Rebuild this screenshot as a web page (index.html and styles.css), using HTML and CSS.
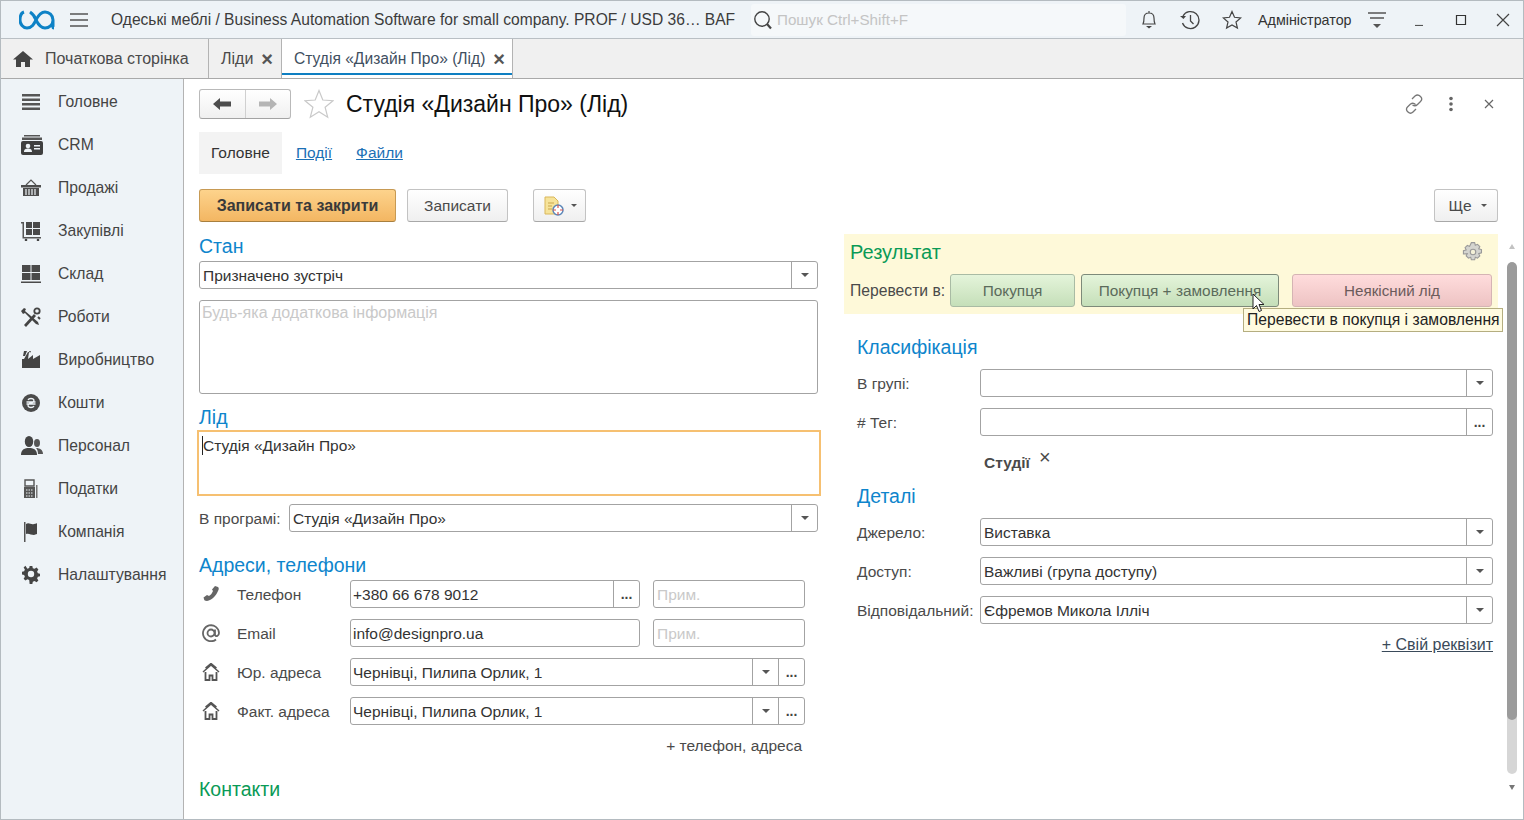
FILE: index.html
```html
<!DOCTYPE html>
<html>
<head>
  <meta charset="utf-8">
  <link rel="stylesheet" href="styles.css">
</head>
<body>
  <div class="app">
    <!-- Top bar -->
    <div class="topbar">
      <svg class="logo" width="36" height="20" viewBox="0 0 36 20"><path d="M5 2C2 3 1 6 1 10c0 4 3 8 7 8 5 0 7-4 9-8 2-4 5-8 9-8 4 0 8 3 8 8s-4 8-8 8c-4 0-7-4-9-8-1-3-3-6-6-8M34 10v7c0 1 0 1 1 1" fill="none" stroke="#0e82c6" stroke-width="3"/></svg>
      <svg class="burger" width="18" height="16" viewBox="0 0 18 16"><path d="M0 2h18M0 8h18M0 14h18" stroke="#555" stroke-width="1.4"/></svg>
      <div class="app-title">Одеські меблі / Business Automation Software for small company. PROF / USD 36… BAF</div>
      <div class="search">
        <svg width="22" height="22" viewBox="0 0 22 22"><circle cx="10" cy="10" r="7.2" fill="none" stroke="#444" stroke-width="1.4"/><path d="M15 15l4 4.500" stroke="#444" stroke-width="2.200"/></svg>
        <span class="search-text">Пошук Ctrl+Shift+F</span>
      </div>
      <div class="top-icons">
        <svg width="18" height="20" viewBox="0 0 18 20"><path d="M3 14c1-2 1-3 1-6 0-3 2-5 5-5s5 2 5 5c0 3 0 4 1 6zM9 1v2" fill="none" stroke="#444" stroke-width="1.200"/><path d="M6 16h6l-3 2.500z" fill="#444"/></svg>
        <svg width="22" height="20" viewBox="0 0 22 20"><path d="M4 6a8.500 8.500 0 1 1-.5 7M11.500 5v6l3 3" fill="none" stroke="#444" stroke-width="1.300"/><path d="M1 6h6l-2.500 3z" fill="#444"/></svg>
        <svg width="20" height="20" viewBox="0 0 20 20"><path d="M10 1.500l2.500 5.800 6.200.6-4.700 4.100 1.400 6.100-5.400-3.200-5.400 3.200 1.400-6.100L1.300 7.900l6.200-.6z" fill="none" stroke="#444" stroke-width="1.200"/></svg>
      </div>
      <div class="user-name">Адміністратор</div>
      <svg class="user-menu" width="18" height="20" viewBox="0 0 18 20"><path d="M0 3h18M2 8h14" stroke="#555" stroke-width="1.400"/><path d="M5 14h8l-4 4z" fill="#555"/></svg>
      <div class="win-btns">
        <svg width="12" height="12" viewBox="0 0 12 12"><path d="M1 11.500h8" stroke="#555" stroke-width="1.200"/></svg>
        <svg width="12" height="12" viewBox="0 0 12 12"><path d="M1.500 1.500h9v9h-9z" fill="none" stroke="#333" stroke-width="1.200"/></svg>
        <svg width="14" height="14" viewBox="0 0 14 14"><path d="M1 1l12 12M13 1L1 13" stroke="#444" stroke-width="1.200"/></svg>
      </div>
    </div>

    <!-- Open tabs -->
    <div class="tabs">
      <div class="tab tab-home">
        <svg width="20" height="16" viewBox="0 0 20 16"><path d="M10 0L0 8.500h3V16h5v-5h4v5h5V8.500h3z" fill="#444"/></svg>
        <span>Початкова сторінка</span>
      </div>
      <div class="tab tab-leads"><span>Ліди</span><span class="tab-close">×</span></div>
      <div class="tab tab-active"><span>Студія «Дизайн Про» (Лід)</span><span class="tab-close">×</span></div>
    </div>

    <div class="workspace">
      <!-- Section menu -->
      <div class="sidebar">
        <div class="side-item">
          <svg width="20" height="20" viewBox="0 0 20 20"><path d="M1 2h18v2.500H1zM1 6.500h18V9H1zM1 11h18v2.500H1zM1 15.500h18V18H1z" fill="#555"/></svg>
          <span>Головне</span>
        </div>
        <div class="side-item">
          <svg width="22" height="20" viewBox="0 0 22 20"><path d="M3 0h16v1.500H3zM1 2.500h20V5H1z" fill="#555"/><path d="M2 6h18q2 0 2 2v10q0 2-2 2H2q-2 0-2-2V8q0-2 2-2z" fill="#3f3f3f"/><circle cx="7" cy="11" r="2.300" fill="#eef3f7"/><path d="M3 17c0-3 2-3.500 4-3.500s4 .5 4 3.500zM13 10h6v1.500h-6zM13 13h6v1.500h-6z" fill="#eef3f7"/></svg>
          <span>CRM</span>
        </div>
        <div class="side-item">
          <svg width="20" height="20" viewBox="0 0 20 20"><path d="M5 7l5-5 5 5" fill="none" stroke="#555" stroke-width="1.200"/><path d="M0 7h20v2.500H0zM2 10h16v8H2z" fill="#4d4d4d"/><path d="M5 11v6M8 11v6M11 11v6M14 11v6" stroke="#eef3f7" stroke-width="1.200"/></svg>
          <span>Продажі</span>
        </div>
        <div class="side-item">
          <svg width="20" height="20" viewBox="0 0 20 20"><path d="M0 1h3v15h17v1.500H1.500V2.500H0z" fill="#555"/><path d="M5 1h6v6H5zM12 1h7v6h-7zM5 8h6v6H5zM12 8h7v6h-7z" fill="#4a4a4a"/><circle cx="5" cy="19" r="1.300" fill="#444"/><circle cx="17" cy="19" r="1.300" fill="#444"/></svg>
          <span>Закупівлі</span>
        </div>
        <div class="side-item">
          <svg width="20" height="20" viewBox="0 0 20 20"><path d="M1 1h8.500v7H1zM10.500 1H19v7h-8.500zM1 9h8.500v7H1zM10.500 9H19v7h-8.500zM0 17.500h20V19H0z" fill="#4a4a4a"/></svg>
          <span>Склад</span>
        </div>
        <div class="side-item">
          <svg width="20" height="20" viewBox="0 0 20 20"><path d="M0 4l3-3 2 1-1 2 13 11 1 3-3-1L4 6 2 7z" fill="#444"/><path d="M3 18L13 7l2 2L5 20z" fill="#444"/><circle cx="16" cy="4" r="2.700" fill="none" stroke="#444" stroke-width="1.800"/><path d="M17 10l2 2" stroke="#444" stroke-width="2"/></svg>
          <span>Роботи</span>
        </div>
        <div class="side-item">
          <svg width="20" height="20" viewBox="0 0 20 20"><path d="M1 18V9l2 0 4-7h1l-1 7 5-4v4l7-4v13z" fill="#444"/><path d="M3 1h3L4 6H2zM8 1h2L9 3z" fill="#444"/></svg>
          <span>Виробництво</span>
        </div>
        <div class="side-item">
          <svg width="20" height="20" viewBox="0 0 20 20"><circle cx="10" cy="10" r="9" fill="#4a4a4a"/><path d="M7 7c1-2 5-2 6 0 0 2-2 3-3 3s-3 1-3 3c1 2 5 2 6 0M5.500 9h9M5.500 11h9" fill="none" stroke="#eef3f7" stroke-width="1.300"/></svg>
          <span>Кошти</span>
        </div>
        <div class="side-item">
          <svg width="22" height="20" viewBox="0 0 22 20"><ellipse cx="8" cy="5.500" rx="4.200" ry="5.500" fill="#444"/><path d="M0 19c0-6 4-7 8-7s8 1 8 7z" fill="#444"/><ellipse cx="16" cy="7" rx="3" ry="4" fill="#555"/><path d="M17 18c0-3-1-5-2-6 4 0 7 2 7 6z" fill="#555"/></svg>
          <span>Персонал</span>
        </div>
        <div class="side-item">
          <svg width="20" height="20" viewBox="0 0 20 20"><path d="M4 1h9v6H4z" fill="none" stroke="#555" stroke-width="1.400"/><path d="M3 8h11v11H3z" fill="#555"/><path d="M15 6h1.500v13H15z" fill="#777"/><path d="M5 11h7M5 14h7M5 17h7" stroke="#eef3f7" stroke-width="1.100" stroke-dasharray="1.500 1"/></svg>
          <span>Податки</span>
        </div>
        <div class="side-item">
          <svg width="20" height="20" viewBox="0 0 20 20"><path d="M3 0h1.500v20H3z" fill="#555"/><path d="M5 2c3-2 5 1 8 0 2 0 3-1 3-1v11s-1 0-3 1c-3 0-5-2-8-1z" fill="#444"/></svg>
          <span>Компанія</span>
        </div>
        <div class="side-item">
          <svg width="20" height="20" viewBox="0 0 20 20"><path d="M8.500 1h3l.5 2.500 2 .8 2.200-1.400 2 2-1.400 2.200.8 2 2.400.5v3l-2.400.5-.8 2 1.400 2.200-2 2-2.200-1.400-2 .8-.5 2.300h-3L8 16.700l-2-.8-2.200 1.400-2-2L3.200 13l-.8-2L0 10.500v-3L2.400 7l.8-2-1.400-2.200 2-2L6 4.200l2-.8z" transform="translate(1 0) scale(.9)" fill="#444"/><circle cx="10" cy="9" r="3.200" fill="#eef3f7"/></svg>
          <span>Налаштування</span>
        </div>
      </div>

      <!-- Form -->
      <div class="form-page">
        <div class="form-head">
          <div class="nav-btns">
            <div class="nav-btn">
              <svg width="18" height="12" viewBox="0 0 18 12"><path d="M0 6l7-6v3.500h11v5H7V12z" fill="#4d4d4d"/></svg>
            </div>
            <div class="nav-btn">
              <svg width="18" height="12" viewBox="0 0 18 12"><path d="M18 6l-7-6v3.500H0v5h11V12z" fill="#b5b5b5"/></svg>
            </div>
          </div>
          <svg class="fav-star" width="30" height="30" viewBox="0 0 30 30"><path d="M15 1.500l3.800 9.500 10.200.7-7.900 6.500 2.600 10-8.700-5.500-8.700 5.500 2.600-10L1 11.700 11.200 11z" fill="none" stroke="#c9c9c9" stroke-width="1.200"/></svg>
          <h1 class="form-title">Студія «Дизайн Про» (Лід)</h1>
          <div class="head-tools">
            <svg class="tool-link" width="20" height="20" viewBox="0 0 20 20"><path d="M8 5l3-3c2-1.500 4-1 5.500.5s1.500 3.500 0 5l-3 3c-1.500 1.500-3.500 1.500-5 .5M12 15l-3 3c-1.500 1.500-3.500 1.500-5 0s-2-3.500-.5-5l3-3c1.500-1 3.500-1 5 .5" fill="none" stroke="#777" stroke-width="1.300"/></svg>
            <svg class="tool-more" width="6" height="16" viewBox="0 0 6 16"><circle cx="3" cy="2.500" r="1.800" fill="#666"/><circle cx="3" cy="8" r="1.800" fill="#666"/><circle cx="3" cy="13.500" r="1.800" fill="#666"/></svg>
            <svg width="10" height="10" viewBox="0 0 10 10"><path d="M1 1l8 8M9 1L1 9" stroke="#666" stroke-width="1.200"/></svg>
          </div>
        </div>

        <div class="page-tabs">
          <div class="page-tab page-tab-active">Головне</div>
          <a class="page-tab page-link">Події</a>
          <a class="page-tab page-link">Файли</a>
        </div>

        <div class="toolbar">
          <div class="btn btn-primary">Записати та закрити</div>
          <div class="btn btn-save">Записати</div>
          <div class="btn btn-icon">
            <svg width="22" height="20" viewBox="0 0 22 20"><path d="M2 1h9l4 4v13H2z" fill="#f6e39a" stroke="#d9b75a"/><path d="M5 7h6M5 10h4M5 13h4" stroke="#c9a64d"/><circle cx="15" cy="14" r="5" fill="#fff" stroke="#5b86b8" stroke-width="1.500"/><path d="M15 9v3M15 16v3M10 14h3M17 14h3" stroke="#d9534f" stroke-width="1.200"/></svg>
            <span class="caret caret-small"></span>
          </div>
          <div class="btn btn-more">Ще<span class="caret caret-small"></span></div>
        </div>

        <div class="columns">
          <div class="col-left">
            <div class="heading heading-first">Стан</div>
            <div class="field">
              <div class="field-text">Призначено зустріч</div>
              <div class="field-btn"><span class="caret"></span></div>
            </div>
            <div class="memo">Будь-яка додаткова інформація</div>

            <div class="heading heading-lead">Лід</div>
            <div class="lead-box"><span class="text-cursor"></span>Студія «Дизайн Про»</div>
            <div class="row-program">
              <label class="label-program">В програмі:</label>
              <div class="field field-grow">
                <div class="field-text">Студія «Дизайн Про»</div>
                <div class="field-btn"><span class="caret"></span></div>
              </div>
            </div>

            <div class="heading heading-address">Адреси, телефони</div>
            <div class="contact-row">
              <svg class="contact-icon" width="18" height="18" viewBox="0 0 18 18"><path d="M13 1l3 1c1 1 1 2 0 4-2 5-6 9-11 10-2 0-3-1-3-2l-.5-1.500 3.500-2.500 2 1c2-1 3-3 4-5l-1-1.500z" fill="#666"/></svg>
              <span class="contact-label">Телефон</span>
              <div class="field contact-field">
                <div class="field-text">+380 66 678 9012</div>
                <div class="field-btn field-dots">...</div>
              </div>
              <div class="field note-field"><div class="field-text note-text">Прим.</div></div>
            </div>
            <div class="contact-row">
              <svg class="contact-icon" width="18" height="18" viewBox="0 0 18 18"><path d="M14 15.500A8 8 0 1 1 17 9c0 3-3 4-4 2V5.500M12.500 9a3.500 3.500 0 1 1-7 0 3.500 3.500 0 0 1 7 0z" fill="none" stroke="#666" stroke-width="1.800"/></svg>
              <span class="contact-label">Email</span>
              <div class="field contact-field">
                <div class="field-text">info@designpro.ua</div>
              </div>
              <div class="field note-field"><div class="field-text note-text">Прим.</div></div>
            </div>
            <div class="contact-row">
              <svg class="contact-icon" width="18" height="18" viewBox="0 0 18 18"><path d="M1 9l8-7 8 7M3.500 5l5.500-4.500L14.500 5" fill="none" stroke="#555" stroke-width="1.500"/><path d="M3.500 9v8h4v-4.500h3V17h4V9" fill="none" stroke="#555" stroke-width="1.800"/></svg>
              <span class="contact-label">Юр. адреса</span>
              <div class="field contact-field">
                <div class="field-text">Чернівці, Пилипа Орлик, 1</div>
                <div class="field-btn"><span class="caret"></span></div>
                <div class="field-btn field-dots">...</div>
              </div>
            </div>
            <div class="contact-row">
              <svg class="contact-icon" width="18" height="18" viewBox="0 0 18 18"><path d="M1 9l8-7 8 7M3.500 5l5.500-4.500L14.500 5" fill="none" stroke="#555" stroke-width="1.500"/><path d="M3.500 9v8h4v-4.500h3V17h4V9" fill="none" stroke="#555" stroke-width="1.800"/></svg>
              <span class="contact-label">Факт. адреса</span>
              <div class="field contact-field">
                <div class="field-text">Чернівці, Пилипа Орлик, 1</div>
                <div class="field-btn"><span class="caret"></span></div>
                <div class="field-btn field-dots">...</div>
              </div>
            </div>
            <div class="add-contact">+ телефон, адреса</div>
            <div class="heading heading-green heading-contacts">Контакти</div>
          </div>

          <div class="col-right">
            <div class="result-box">
              <div class="result-head">
                <div class="result-title">Результат</div>
                <svg width="22" height="22" viewBox="0 0 20 20"><path d="M8.500 1h3l.6 2.400 2-.9 2.100 2.100-1 2 2.500.7v3l-2.500.7 1 2-2.100 2.100-2-.9-.6 2.400h-3l-.6-2.400-2 .9-2.100-2.100 1-2L1.300 11.300v-3L3.800 7.600l-1-2 2.100-2.100 2 .9z" transform="translate(0 .5)" fill="#d4d4cf" stroke="#999" stroke-width="1"/><circle cx="10" cy="10" r="2.500" fill="#f4f1d8" stroke="#999"/></svg>
              </div>
              <div class="result-row">
                <span class="result-label">Перевести в:</span>
                <div class="btn btn-green btn-buy">Покупця</div>
                <div class="btn btn-green btn-order">Покупця + замовлення</div>
                <div class="btn btn-red">Неякісний лід</div>
              </div>
              <div class="tooltip">Перевести в покупця і замовлення</div>
              <svg class="mouse" width="13" height="21" viewBox="0 0 13 21"><path d="M1 1v15l3.500-3.500 2.500 6 2.500-1-2.500-6H12z" fill="#fff" stroke="#222"/></svg>
            </div>

            <div class="right-inner">
              <div class="heading heading-class">Класифікація</div>
              <div class="form-row">
                <label>В групі:</label>
                <div class="field field-grow">
                  <div class="field-text"></div>
                  <div class="field-btn"><span class="caret"></span></div>
                </div>
              </div>
              <div class="form-row">
                <label># Тег:</label>
                <div class="field field-grow">
                  <div class="field-text"></div>
                  <div class="field-btn field-dots">...</div>
                </div>
              </div>
              <div class="tag-row"><b>Студії</b><span class="tag-close">×</span></div>

              <div class="heading heading-details">Деталі</div>
              <div class="form-row">
                <label>Джерело:</label>
                <div class="field field-grow">
                  <div class="field-text">Виставка</div>
                  <div class="field-btn"><span class="caret"></span></div>
                </div>
              </div>
              <div class="form-row">
                <label>Доступ:</label>
                <div class="field field-grow">
                  <div class="field-text">Важливі (група доступу)</div>
                  <div class="field-btn"><span class="caret"></span></div>
                </div>
              </div>
              <div class="form-row">
                <label>Відповідальний:</label>
                <div class="field field-grow">
                  <div class="field-text">Єфремов Микола Ілліч</div>
                  <div class="field-btn"><span class="caret"></span></div>
                </div>
              </div>
              <div class="custom-link"><a>+ Свій реквізит</a></div>
            </div>
          </div>
        </div>

        <!-- Scrollbar of the form -->
        <div class="scroll">
          <span class="scroll-up"></span>
          <div class="scroll-track"><div class="scroll-thumb"></div></div>
          <span class="scroll-down"></span>
        </div>
      </div>
    </div>
  </div>
</body>
</html>
```

FILE: styles.css
```css
/* Page */
* {
  box-sizing: border-box;
}

html, body {
  margin: 0;
  height: 100%;
  overflow: hidden;
}

body {
  font-family: "Liberation Sans", Arial, sans-serif;
  font-size: 15.5px;
  color: #4a4a4a;
  background: #fff;
}

.app {
  width: 1524px;
  height: 820px;
  display: flex;
  flex-direction: column;
  border: 1px solid #b4bbc0;
  overflow: hidden;
}

/* Top bar */
.topbar {
  height: 38px;
  flex: none;
  display: flex;
  align-items: center;
  background: #eef3f7;
  border-bottom: 1px solid #b9bfc4;
}

.logo {
  margin-left: 18px;
  flex: none;
}

.burger {
  margin-left: 15px;
  flex: none;
}

.app-title {
  margin-left: 23px;
  width: 640px;
  white-space: nowrap;
  color: #3c3c3c;
  font-size: 15.6px;
}

.search {
  width: 375px;
  height: 32px;
  display: flex;
  align-items: center;
  background: #f5f8fa;
  border-radius: 3px;
  padding-left: 1px;
}

.search-text {
  margin-left: 3px;
  color: #c4c4c4;
  font-size: 15.2px;
}

.top-icons {
  display: flex;
  align-items: center;
  gap: 21px;
  margin-left: 14px;
}

.user-name {
  margin-left: 16px;
  font-size: 14.3px;
  color: #333;
  white-space: nowrap;
}

.user-menu {
  margin-left: 16px;
}

.win-btns {
  display: flex;
  align-items: center;
  gap: 29px;
  margin-left: 28px;
}

/* Open tabs */
.tabs {
  height: 40px;
  flex: none;
  display: flex;
  background: #f0f0f0;
  border-bottom: 1px solid #a9a9a9;
}

.tab {
  display: flex;
  align-items: center;
  height: 39px;
  border-right: 1px solid #b3b3b3;
  white-space: nowrap;
  color: #4a4a4a;
  font-size: 16px;
}

.tab-home {
  width: 208px;
  padding-left: 12px;
  gap: 12px;
}

.tab-leads {
  width: 73px;
  padding-left: 12px;
  gap: 8px;
}

.tab-active {
  width: 231px;
  padding-left: 12px;
  gap: 8px;
  background: #fff;
  color: #3f4f5f;
  font-size: 15.6px;
  box-shadow: inset 0 -3px 0 #fff, inset 0 -5px 0 #0e7fc2;
}

.tab-close {
  font-size: 20px;
  font-weight: bold;
  line-height: 20px;
  color: #555;
}

/* Workspace */
.workspace {
  flex: 1;
  display: flex;
  min-height: 0;
}

.sidebar {
  width: 183px;
  flex: none;
  background: #eef3f7;
  border-right: 1px solid #b3b3b3;
  padding-top: 1px;
  font-size: 15.7px;
}

.side-item {
  height: 43px;
  display: flex;
  align-items: center;
  padding-left: 20px;
  color: #444;
}

.side-item svg {
  flex: none;
  margin-right: 15px;
}

.side-item svg[width="20"] {
  margin-right: 17px;
}

/* Form */
.form-page {
  flex: 1;
  position: relative;
  padding: 10px 0 0 15px;
  min-width: 0;
}

.form-head {
  display: flex;
  align-items: center;
  height: 30px;
}

.nav-btns {
  display: flex;
  width: 92px;
  height: 30px;
  border: 1px solid #b9b9b9;
  border-bottom-color: #a3a3a3;
  border-radius: 3px;
  background: linear-gradient(#fff, #f0f0f0);
}

.nav-btn {
  flex: 1;
  display: flex;
  align-items: center;
  justify-content: center;
}

.nav-btn + .nav-btn {
  border-left: 1px solid #d0d0d0;
}

.fav-star {
  margin-left: 13px;
}

.form-title {
  margin: 0 0 0 12px;
  font-size: 23px;
  font-weight: normal;
  color: #111;
  white-space: nowrap;
}

.head-tools {
  margin-left: auto;
  margin-right: 29px;
  display: flex;
  align-items: center;
}

.tool-link {
  margin-right: 24px;
}

.tool-more {
  margin-right: 30px;
}

.page-tabs {
  display: flex;
  margin-top: 13px;
  height: 42px;
  align-items: center;
}

.page-tab {
  height: 42px;
  display: flex;
  align-items: center;
  padding: 0 12px;
}

.page-tab-active {
  background: #f3f3f3;
  color: #333;
}

.page-link {
  color: #1b6fb5;
  text-decoration: underline;
  padding: 0;
  margin-left: 14px;
}

.page-link + .page-link {
  margin-left: 24px;
}

/* Buttons */
.toolbar {
  display: flex;
  align-items: center;
  margin-top: 15px;
  height: 33px;
  padding-right: 25px;
}

.btn {
  height: 33px;
  display: flex;
  align-items: center;
  justify-content: center;
  border: 1px solid #c3c3c3;
  border-bottom-color: #a8a8a8;
  border-radius: 3px;
  background: linear-gradient(#fff, #efefef);
  white-space: nowrap;
}

.btn-primary {
  width: 197px;
  font-weight: bold;
  font-size: 16px;
  color: #3a3a3a;
  border-color: #c79a54 #c79a54 #a87f3e;
  background: linear-gradient(#fdd38c, #f3b662);
}

.btn-save {
  width: 101px;
  margin-left: 11px;
}

.btn-icon {
  width: 53px;
  margin-left: 25px;
  gap: 6px;
}

.btn-more {
  width: 64px;
  margin-left: auto;
  gap: 9px;
  padding-left: 3px;
}

.btn-green {
  color: #5b6b5b;
  border-color: #a9bba4;
  background: linear-gradient(#e4f4da, #c5dfb9);
  font-size: 15.4px;
}

.btn-buy {
  width: 125px;
  margin-left: 5px;
}

.btn-order {
  width: 198px;
  margin-left: 6px;
  border-color: #7d8a7a;
}

.btn-red {
  width: 200px;
  margin-left: 13px;
  color: #6b5b5b;
  border-color: #d5b4b4;
  background: linear-gradient(#ffdcdc, #edc3c3);
  font-size: 15.2px;
}

.caret {
  display: inline-block;
  width: 0;
  height: 0;
  border-left: 4px solid transparent;
  border-right: 4px solid transparent;
  border-top: 4px solid #555;
}

.caret-small {
  border-left-width: 3px;
  border-right-width: 3px;
  border-top-width: 3px;
}

/* Columns */
.columns {
  display: flex;
  gap: 26px;
  margin-top: 12px;
}

.col-left {
  width: 619px;
  flex: none;
}

.col-right {
  width: 654px;
  flex: none;
}

.heading {
  font-size: 19.5px;
  line-height: 24px;
  height: 24px;
  color: #0e85cc;
  white-space: nowrap;
}

.heading-first {
  margin-top: 0;
  height: 27px;
}

.heading-lead {
  margin-top: 11px;
  height: 25px;
}

.heading-address {
  margin-top: 21px;
  height: 27px;
}

.heading-green {
  color: #0a9a56;
}

.heading-contacts {
  margin-top: 21px;
}

/* Fields */
.field {
  height: 28px;
  display: flex;
  border: 1px solid #a3a3a3;
  border-radius: 3px;
  background: #fff;
}

.field-grow {
  flex: 1;
}

.field-text {
  flex: 1;
  min-width: 0;
  padding: 0 3px;
  line-height: 28px;
  color: #333;
  white-space: nowrap;
  overflow: hidden;
}

.field-btn {
  width: 26px;
  flex: none;
  display: flex;
  align-items: center;
  justify-content: center;
  border-left: 1px solid #a3a3a3;
}

.field-dots {
  align-items: flex-start;
  font-weight: bold;
  font-size: 14px;
  line-height: 26px;
  color: #444;
}

.memo {
  height: 94px;
  margin-top: 11px;
  padding: 3px 2px;
  border: 1px solid #a3a3a3;
  border-radius: 3px;
  color: #c9c9c9;
  line-height: 18px;
  font-size: 16px;
}

.lead-box {
  position: relative;
  height: 66px;
  margin: 0 -3px 0 -2px;
  padding: 4px 4px;
  border: 2px solid #f6c071;
  line-height: 20px;
  color: #333;
}

.text-cursor {
  position: absolute;
  left: 3px;
  top: 4px;
  width: 1px;
  height: 19px;
  background: #222;
}

.row-program {
  display: flex;
  align-items: center;
  margin-top: 8px;
}

.label-program {
  width: 90px;
  flex: none;
  white-space: nowrap;
  padding-top: 1px;
}

.contact-row {
  display: flex;
  align-items: center;
  height: 28px;
  margin-bottom: 11px;
  width: 606px;
}

.contact-icon {
  flex: none;
  margin-left: 3px;
}

.contact-label {
  width: 113px;
  flex: none;
  margin-left: 17px;
  white-space: nowrap;
  padding-top: 1px;
}

.contact-field {
  flex: 1;
}

.contact-field .field-text {
  padding-left: 2px;
}

.note-field {
  width: 152px;
  flex: none;
  margin-left: 13px;
}

.note-text {
  color: #c9c9c9;
}

.add-contact {
  width: 603px;
  text-align: right;
  margin-top: 4px;
  line-height: 20px;
}

/* Result panel */
.result-box {
  position: relative;
  height: 80px;
  background: #fef9d9;
  padding: 0 6px;
}

.result-head {
  display: flex;
  align-items: center;
  justify-content: space-between;
  height: 36px;
  padding-right: 8px;
}

.result-title {
  font-size: 20px;
  color: #0a9a56;
}

.result-row {
  display: flex;
  align-items: center;
  margin-top: 4px;
}

.result-label {
  width: 95px;
  flex: none;
  white-space: nowrap;
  padding-top: 1px;
  font-size: 15.7px;
}

.tooltip {
  position: absolute;
  left: 399px;
  top: 74px;
  width: 260px;
  height: 24px;
  padding-left: 3px;
  line-height: 22px;
  background: #fffbe0;
  border: 1px solid #b5ae80;
  color: #222;
  white-space: nowrap;
  font-size: 15.7px;
  z-index: 2;
}

.mouse {
  position: absolute;
  left: 408px;
  top: 59px;
  z-index: 3;
}

/* Right column rows */
.right-inner {
  padding: 21px 5px 0 13px;
}

.heading-class {
  height: 34px;
}

.form-row {
  display: flex;
  align-items: center;
  height: 28px;
  margin-bottom: 11px;
}

.form-row label {
  width: 123px;
  flex: none;
  white-space: nowrap;
  padding-top: 1px;
}

.tag-row {
  height: 26px;
  padding-left: 127px;
  margin-top: 3px;
  display: flex;
  align-items: center;
}

.tag-row b {
  padding-top: 5px;
}

.tag-close {
  margin-left: 9px;
  font-size: 20px;
  line-height: 14px;
  margin-top: -6px;
}

.heading-details {
  margin-top: 11px;
  height: 34px;
}

.custom-link {
  text-align: right;
  margin-top: 1px;
  line-height: 20px;
  font-size: 16px;
}

.custom-link a {
  text-decoration: underline;
  color: #3a4a5a;
}

/* Scrollbar */
.scroll {
  position: absolute;
  right: 6px;
  top: 165px;
  width: 10px;
  height: 550px;
  display: flex;
  flex-direction: column;
  align-items: center;
}

.scroll-up, .scroll-down {
  width: 0;
  height: 0;
  border-left: 3px solid transparent;
  border-right: 3px solid transparent;
}

.scroll-up {
  border-bottom: 5px solid #c2c2c2;
  margin-bottom: 13px;
}

.scroll-down {
  border-top: 5px solid #777;
  margin-top: 11px;
}

.scroll-track {
  width: 10px;
  height: 512px;
  background: #d6d6d6;
  border-radius: 5px;
  overflow: hidden;
}

.scroll-thumb {
  height: 458px;
  background: #9b9b9b;
  border-radius: 5px;
}
```
